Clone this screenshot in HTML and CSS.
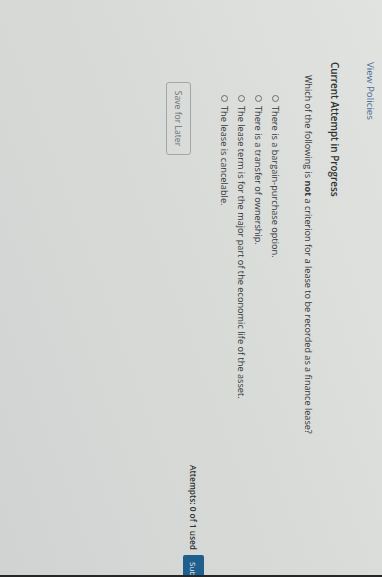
FILE: index.html
```html
<!DOCTYPE html>
<html>
<head>
	<meta charset="utf-8">
	<title>Current Attempt in Progress</title>
	<link rel="stylesheet" href="styles.css">
</head>
<body>
	<div class="screen">
		<div class="page">
			<a class="policies">View Policies</a>
			<h2 class="attempt">Current Attempt in Progress</h2>
			<p class="question">Which of the following is <b>not</b> a criterion for a lease to be recorded as a finance lease?</p>
			<ul class="options">
				<li><span class="radio"></span>There is a bargain-purchase option.</li>
				<li><span class="radio"></span>There is a transfer of ownership.</li>
				<li><span class="radio"></span>The lease term is for the major part of the economic life of the asset.</li>
				<li><span class="radio"></span>The lease is cancelable.</li>
			</ul>
			<div class="actions">
				<button class="save">Save for Later</button>
				<div class="submit-area">
					<span class="attempts">Attempts: 0 of 1 used</span>
					<button class="submit">Submit Answer</button>
				</div>
			</div>
		</div>
	</div>
</body>
</html>
```

FILE: styles.css
```css
html, body {
	margin:0;
	padding:0;
	background:#d6d9d6;
	overflow:hidden;
}
.screen {
	position:absolute;
	top:0;
	left:0;
	width:577px;
	height:382px;
	box-sizing:border-box;
	overflow:hidden;
	transform-origin:0 0;
	transform:translateX(382px) rotate(90deg);
	background:linear-gradient(160deg, #e0e3e0 0%, #d8dbd8 45%, #d0d3d1 100%);
	border-right:2px solid #262626;
	font-family:"Open Sans", "Liberation Sans", sans-serif;
	color:#35383a;
}
.page {
	padding-left:62px;
}
.policies {
	display:block;
	margin-top:5px;
	font-size:9.8px;
	line-height:14px;
	color:#4f6d98;
}
.attempt {
	margin:21px 0 0 0;
	font-size:9.9px;
	font-weight:600;
	line-height:14px;
	color:#2f3233;
}
.question {
	margin:14px 0 0 13px;
	font-size:9.1px;
	line-height:12px;
}
.question b {
	font-weight:700;
}
.options {
	list-style:none;
	margin:18px 0 0 33px;
	padding:0;
	font-size:9.2px;
}
.options li {
	display:flex;
	align-items:center;
	height:17px;
}
.radio {
	width:5px;
	height:5px;
	border:1px solid #6a6d6e;
	border-radius:50%;
	margin-right:4px;
}
.actions {
	display:flex;
	align-items:flex-start;
	width:583px;
	margin-top:12px;
}
.save {
	margin:13px 0 0 20px;
	width:73px;
	height:25px;
	padding:0;
	background:transparent;
	border:1px solid #a3a6a6;
	border-radius:3px;
	font-family:inherit;
	font-size:8.6px;
	color:#6b6e70;
}
.submit-area {
	display:flex;
	align-items:center;
	margin-left:auto;
}
.attempts {
	font-size:8.3px;
	font-weight:600;
	color:#2f3233;
	margin-right:5px;
}
.submit {
	width:90px;
	height:21px;
	padding:0 0 0 7px;
	text-align:left;
	background:#1f5f8e;
	border:0;
	border-radius:2px;
	font-family:inherit;
	font-size:8px;
	color:#e6eef4;
}
```
